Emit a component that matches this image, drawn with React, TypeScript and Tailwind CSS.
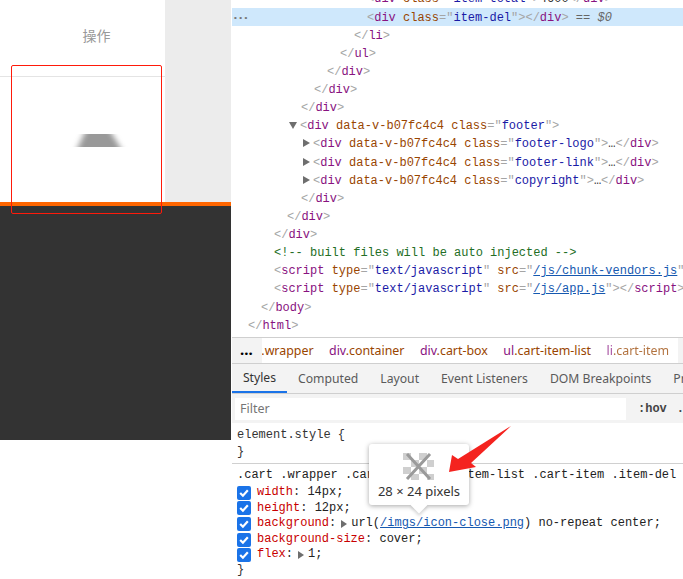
const P = ({ children }: { children: React.ReactNode }) => <span className="text-[#a5a5a5]">{children}</span>;
const T = ({ children }: { children: React.ReactNode }) => <span className="text-[#881280]">{children}</span>;
const A = ({ children }: { children: React.ReactNode }) => <span className="text-[#994500]">{children}</span>;
const V = ({ children }: { children: React.ReactNode }) => <span className="text-[#1a1aa6]">{children}</span>;

function Close({ tag }: { tag: string }) {
  return (
    <>
      <P>{'</'}</P>
      <T>{tag}</T>
      <P>{'>'}</P>
    </>
  );
}

function Collapsed({ name }: { name: string }) {
  return (
    <>
      <P>{'<'}</P>
      <T>div</T> <A>data-v-b07fc4c4</A> <A>class</A>
      <P>="</P>
      <V>{name}</V>
      <P>"{'>'}</P>
      <span className="text-[#333]">…</span>
      <Close tag="div" />
    </>
  );
}

function Arrow({ open }: { open?: boolean }) {
  return (
    <svg width="8" height="8" viewBox="0 0 8 8" className="absolute -left-[11px] top-[2px] fill-[#6e6e6e]">
      {open ? <path d="M0 1h8L4 8z" /> : <path d="M1 0l7 4-7 4z" />}
    </svg>
  );
}

function Line({ left, children, arrow }: { left: number; children: React.ReactNode; arrow?: 'open' | 'closed' }) {
  return (
    <div className="h-[18.13px] pt-[1px] leading-[18px] whitespace-pre" style={{ paddingLeft: left }}>
      <span className="relative">
        {arrow && <Arrow open={arrow === 'open'} />}
        {children}
      </span>
    </div>
  );
}

function ElementsTree() {
  return (
    <div className="h-[338px] overflow-hidden font-['Liberation_Mono',monospace] text-[12px] border-b border-[#cfcfcf]">
      <div className="-mt-[10.6px]">
        <Line left={135}>
          <P>{'<'}</P>
          <T>div</T> <A>class</A>
          <P>="</P>
          <V>item-total</V>
          <P>"{'>'}</P>
          <span className="text-[#333]">4600</span>
          <Close tag="div" />
        </Line>
        <div className="relative bg-[#cfe8fc]">
          <span className="absolute left-[1px] top-[3px] text-[8px] tracking-[0.5px] leading-[14px] text-[#777] font-bold">•••</span>
          <Line left={135}>
            <P>{'<'}</P>
            <T>div</T> <A>class</A>
            <P>="</P>
            <V>item-del</V>
            <P>"{'>'}</P>
            <Close tag="div" />
            <span className="text-[#666]"> == <i>$0</i></span>
          </Line>
        </div>
        <Line left={122}><Close tag="li" /></Line>
        <Line left={108}><Close tag="ul" /></Line>
        <Line left={95}><Close tag="div" /></Line>
        <Line left={82}><Close tag="div" /></Line>
        <Line left={69}><Close tag="div" /></Line>
        <Line left={68} arrow="open">
          <P>{'<'}</P>
          <T>div</T> <A>data-v-b07fc4c4</A> <A>class</A>
          <P>="</P>
          <V>footer</V>
          <P>"{'>'}</P>
        </Line>
        <Line left={81} arrow="closed"><Collapsed name="footer-logo" /></Line>
        <Line left={81} arrow="closed"><Collapsed name="footer-link" /></Line>
        <Line left={81} arrow="closed"><Collapsed name="copyright" /></Line>
        <Line left={69}><Close tag="div" /></Line>
        <Line left={55}><Close tag="div" /></Line>
        <Line left={42}><Close tag="div" /></Line>
        <Line left={42}><span className="text-[#236e25]">{'<!-- built files will be auto injected -->'}</span></Line>
        <Line left={42}>
          <P>{'<'}</P>
          <T>script</T> <A>type</A>
          <P>="</P>
          <V>text/javascript</V>
          <P>"</P> <A>src</A>
          <P>="</P>
          <span className="text-[#1558b0] underline">/js/chunk-vendors.js</span>
          <P>"{'>'}</P>
          <Close tag="script" />
        </Line>
        <Line left={42}>
          <P>{'<'}</P>
          <T>script</T> <A>type</A>
          <P>="</P>
          <V>text/javascript</V>
          <P>"</P> <A>src</A>
          <P>="</P>
          <span className="text-[#1558b0] underline">/js/app.js</span>
          <P>"{'>'}</P>
          <Close tag="script" />
        </Line>
        <Line left={29}><Close tag="body" /></Line>
        <Line left={16}><Close tag="html" /></Line>
      </div>
    </div>
  );
}

function Crumb({ tag, cls, className = '' }: { tag: string; cls: string; className?: string }) {
  return (
    <span className={`shrink-0 ${className}`}>
      <span className="text-[#881280]">{tag}</span>
      <span className="text-[#994500]">{cls}</span>
    </span>
  );
}

function Breadcrumbs() {
  return (
    <div className="flex h-[26px] items-center bg-[#f3f3f3] border-b border-[#cfcfcf]">
      <div className="w-[30px] shrink-0 pl-[8px] text-[15px] font-bold leading-none text-black -mt-[3px]">...</div>
      <div className="flex h-full w-[416px] items-center justify-end gap-[15.5px] overflow-hidden bg-white pr-[9px] pt-[2px] text-[12.4px]">
        <Crumb tag="div" cls=".wrapper" />
        <Crumb tag="div" cls=".container" />
        <Crumb tag="div" cls=".cart-box" />
        <Crumb tag="ul" cls=".cart-item-list" />
        <Crumb tag="li" cls=".cart-item" className="opacity-75" />
      </div>
    </div>
  );
}

const TABS = ['Computed', 'Layout', 'Event Listeners', 'DOM Breakpoints', 'Properties'];

function Tabs() {
  return (
    <div className="flex h-[30px] overflow-hidden bg-[#f3f3f3] border-b border-[#cfcfcf] text-[12.2px] text-[#5a5a5a]">
      <div className="flex h-[29px] w-[55px] shrink-0 items-center justify-center border-b-2 border-[#1a73e8] pt-[1px] text-[#333]">Styles</div>
      {TABS.map((tab) => (
        <div key={tab} className="flex h-[29px] shrink-0 items-center px-[11px] pt-[1px]">{tab}</div>
      ))}
    </div>
  );
}

function FilterBar() {
  return (
    <div className="flex h-[29px] items-center overflow-hidden bg-[#f3f3f3] pl-[3px] text-[12.5px]">
      <div className="flex h-[22px] w-[391px] shrink-0 items-center bg-white pl-[5px] pt-[1px] text-[#757575]">Filter</div>
      <span className="ml-[12px] shrink-0 font-['Liberation_Mono',monospace] text-[12px] font-bold text-[#444]">:hov</span>
      <span className="ml-[10px] shrink-0 font-['Liberation_Mono',monospace] text-[12px] font-bold text-[#444]">.cls</span>
    </div>
  );
}

function Prop({ name, children, arrow }: { name: string; children: React.ReactNode; arrow?: boolean }) {
  return (
    <div className="flex h-[15.6px] items-center whitespace-pre leading-[15.6px]">
      <span className="mr-[6px] flex h-[14px] w-[14px] shrink-0 items-center justify-center rounded-[2px] bg-[#1a73e8]">
        <svg width="12" height="12" viewBox="0 0 11 11" fill="none" stroke="white" strokeWidth="2">
          <path d="M2 5.5l2.5 2.5 4.5-5" />
        </svg>
      </span>
      <span className="text-[#c80000]">{name}</span>
      <span className="text-[#333]">:</span>
      {arrow ? (
        <svg width="8" height="8" viewBox="0 0 8 8" className="ml-[4px] mr-[3px] fill-[#6e6e6e]"><path d="M1 0l6 4-6 4z" /></svg>
      ) : (
        <span> </span>
      )}
      <span className="text-[#222]">{children}</span>
    </div>
  );
}

function StylesPane() {
  return (
    <div className="font-['Liberation_Mono',monospace] text-[12px] text-[#333]">
      <div className="h-[41px] border-b border-[#d0d0d0] px-[5px] pt-[4px] leading-[16px]">
        <div>element.style {'{'}</div>
        <div className="mt-[1px]">{'}'}</div>
      </div>
      <div className="px-[5px] pt-[3px]">
        <div className="h-[18px] leading-[17px] whitespace-pre text-[#222]">.cart .wrapper .cart-box .cart-item-list .cart-item .item-del</div>
        <Prop name="width">14px;</Prop>
        <Prop name="height">12px;</Prop>
        <Prop name="background" arrow>
          url(<span className="text-[#1558b0] underline">/imgs/icon-close.png</span>) no-repeat center;
        </Prop>
        <Prop name="background-size">cover;</Prop>
        <Prop name="flex" arrow>1;</Prop>
        <div className="h-[15px] leading-[15px]">{'}'}</div>
      </div>
    </div>
  );
}

function ImageTooltip() {
  return (
    <div className="absolute left-[137px] top-[444px] flex h-[61px] w-[100px] flex-col items-center rounded-[3px] bg-white pt-[9px] text-[13px] text-[#333] shadow-[0_1px_5px_rgba(0,0,0,0.35)]">
      <svg width="31" height="27" viewBox="0 0 31 27" className="-ml-[2px]">
        <path fill="#cfcfcf" d="M0 0h8v7H0zM16 0h8v7h-8zM8 7h8v7H8zM24 7h7v7h-7zM0 14h8v7H0zM16 14h8v7h-8zM8 21h8v6H8zM24 21h7v6h-7z" />
        <path stroke="#9a9a9a" strokeWidth="3" d="M4 1l23 25M27 1L4 26" />
      </svg>
      <div className="mt-[2px] font-['Noto_Sans',sans-serif] leading-[18px]">28 × 24 pixels</div>
      <div className="absolute -bottom-[6px] left-1/2 h-[12px] w-[12px] -translate-x-1/2 rotate-45 bg-white shadow-[2px_2px_3px_rgba(0,0,0,0.15)]" />
    </div>
  );
}

export default function App() {
  return (
    <div className="relative flex h-[579px] w-[683px] overflow-hidden bg-white font-['Noto_Sans',sans-serif]">
      {/* page under inspection */}
      <div className="flex h-[440px] w-[231px] shrink-0 flex-col">
        <div className="flex h-[202px]">
          <div className="w-[165px] bg-white">
            <div className="flex h-[77px] items-start justify-center border-b border-[#e4e4e4] pl-[28px] pt-[25px] font-['Noto_Sans_CJK_SC',sans-serif] text-[14px] leading-[20px] text-[#999]">
              操作
            </div>
            <div className="flex justify-center pl-[35px] pt-[57px]">
              <svg width="60" height="13" viewBox="0 0 60 13">
                <defs>
                  <filter id="soft" x="-20%" y="-20%" width="140%" height="140%">
                    <feGaussianBlur stdDeviation="3 0" />
                  </filter>
                </defs>
                <path d="M14 0h28l8 13H8z" fill="#999" filter="url(#soft)" />
              </svg>
            </div>
          </div>
          <div className="flex-1 bg-[#ececec]" />
        </div>
        <div className="flex-1 border-t-4 border-[#ff6600] bg-[#333]" />
      </div>
      <div className="absolute left-[11px] top-[65px] h-[149px] w-[151px] rounded-[2px] border border-[#ff1a0a]" />

      {/* devtools */}
      <div className="ml-[1px] flex-1 overflow-hidden">
        <ElementsTree />
        <Breadcrumbs />
        <Tabs />
        <FilterBar />
        <StylesPane />
      </div>

      <div className="absolute inset-y-0 left-[232px] right-0">
        <ImageTooltip />
      </div>
      <svg width="683" height="579" className="pointer-events-none absolute left-0 top-0">
        <path fill="#f4231f" d="M511 426L471 463 476 467 449 472 452 455 458 459z" />
      </svg>
    </div>
  );
}
